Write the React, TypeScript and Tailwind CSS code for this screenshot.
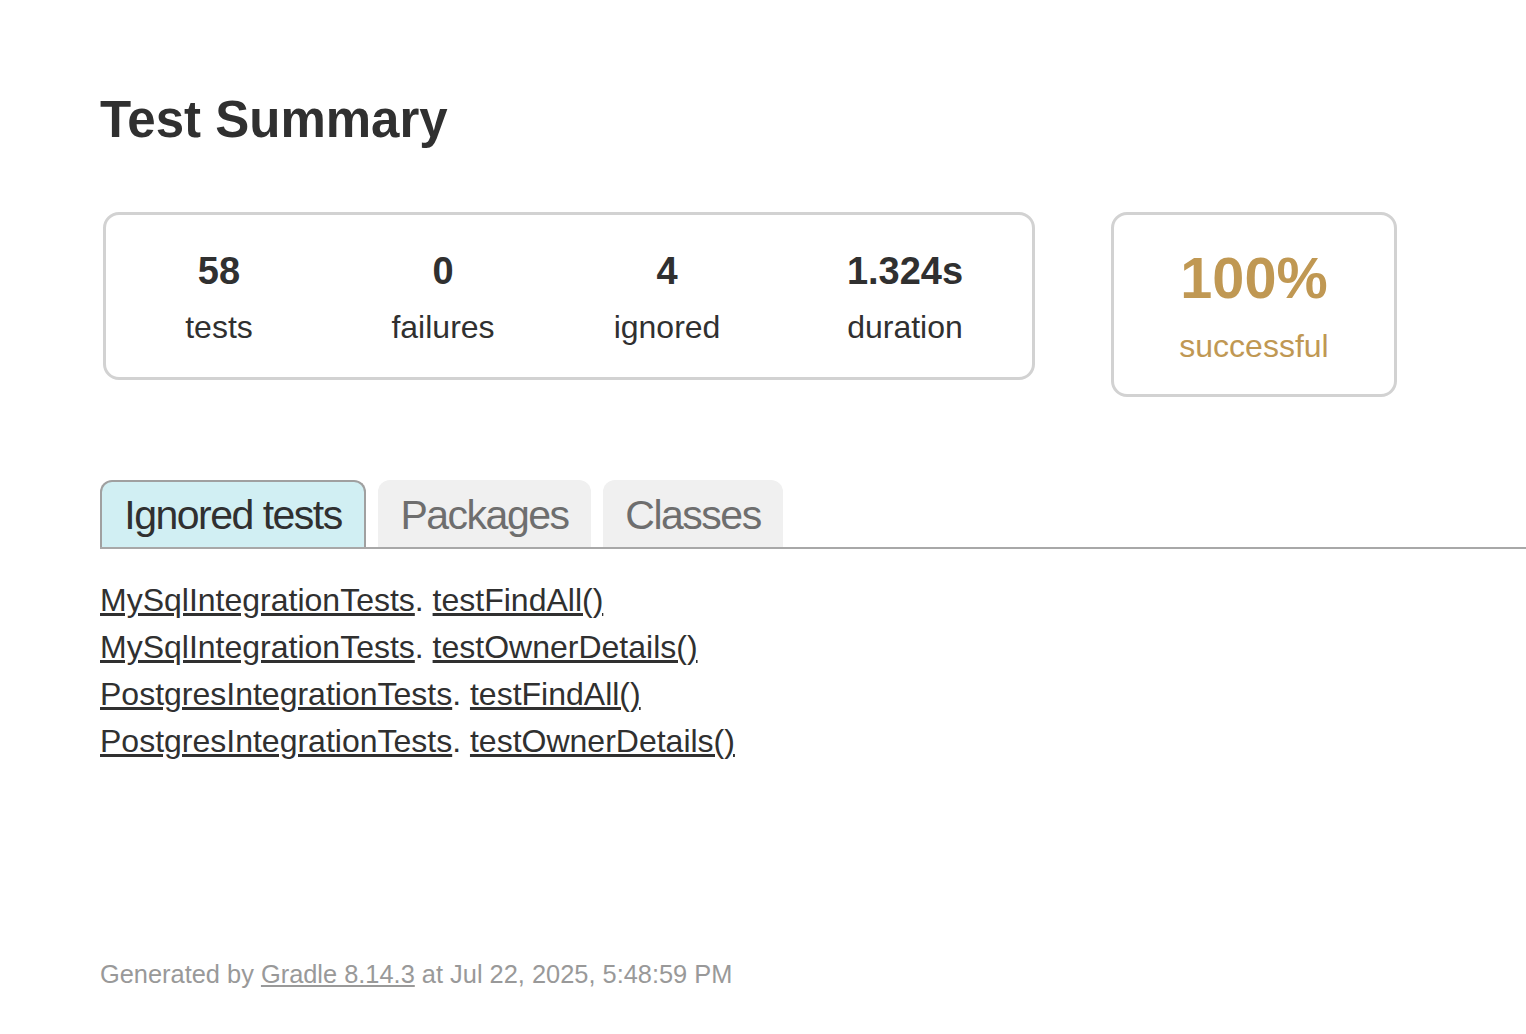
import React from "react";

const tests = [
  { cls: "MySqlIntegrationTests", m: "testFindAll()" },
  { cls: "MySqlIntegrationTests", m: "testOwnerDetails()" },
  { cls: "PostgresIntegrationTests", m: "testFindAll()" },
  { cls: "PostgresIntegrationTests", m: "testOwnerDetails()" },
];

function Info({ value, label, w }: { value: string; label: string; w: string }) {
  return (
    <div className={`flex flex-col items-center ${w}`}>
      <div className="text-[38px] leading-[44px] font-bold">{value}</div>
      <div className="mt-[14px] text-[32px] leading-[40px]">{label}</div>
    </div>
  );
}

export default function App() {
  return (
    <div
      className="min-h-screen bg-white text-[#303030] pl-[100px] pt-[90px] pb-[40px]"
      style={{ fontFamily: '"Liberation Sans", Arial, Helvetica, sans-serif' }}
    >
      <h1 className="text-[51px] leading-[60px] font-bold">Test Summary</h1>

      <div className="mt-[62px] ml-[3px] flex items-start">
        <div className="w-[932px] h-[168px] border-[3px] border-[#d2d2d2] rounded-[16px] flex px-[1px] pt-[34px]">
          <Info value="58" label="tests" w="w-[224px]" />
          <Info value="0" label="failures" w="w-[224px]" />
          <Info value="4" label="ignored" w="w-[224px]" />
          <Info value="1.324s" label="duration" w="w-[252px]" />
        </div>
        <div className="ml-[76px] w-[286px] h-[185px] border-[3px] border-[#d2d2d2] rounded-[16px] flex flex-col items-center pt-[30px] text-[#c09853]">
          <div className="text-[57.6px] leading-[66px] font-bold">100%</div>
          <div className="mt-[15px] text-[32px] leading-[40px]">successful</div>
        </div>
      </div>

      <div className="mt-[83px] flex gap-[12px] border-b-2 border-[#a8a8a8] h-[69px]">
        <div className="w-[266px] h-[67px] bg-[#d1eff3] border-2 border-b-0 border-[#a0a0a0] rounded-t-[12px] text-center pt-[5px] text-[41px] leading-[57px] tracking-[-1.5px] text-[#303030]">
          Ignored tests
        </div>
        <div className="w-[213px] h-[67px] bg-[#f0f0f0] rounded-t-[12px] text-center pt-[7px] text-[41px] leading-[57px] tracking-[-1.5px] text-[#6e6e6e]">
          Packages
        </div>
        <div className="w-[180px] h-[67px] bg-[#f0f0f0] rounded-t-[12px] text-center pt-[7px] text-[41px] leading-[57px] tracking-[-1.5px] text-[#6e6e6e]">
          Classes
        </div>
      </div>

      <ul className="mt-[28px] text-[32px] leading-[47px]">
        {tests.map((t, i) => (
          <li key={i}>
            <a href="#" className="underline text-[#303030]">{t.cls}</a>
            <span>. </span>
            <a href="#" className="underline text-[#303030]">{t.m}</a>
          </li>
        ))}
      </ul>

      <div className="mt-[194px] text-[25.4px] leading-[30px] text-[#999999]">
        Generated by <a href="#" className="underline text-[#999999]">Gradle 8.14.3</a> at Jul 22, 2025, 5:48:59 PM
      </div>
    </div>
  );
}
